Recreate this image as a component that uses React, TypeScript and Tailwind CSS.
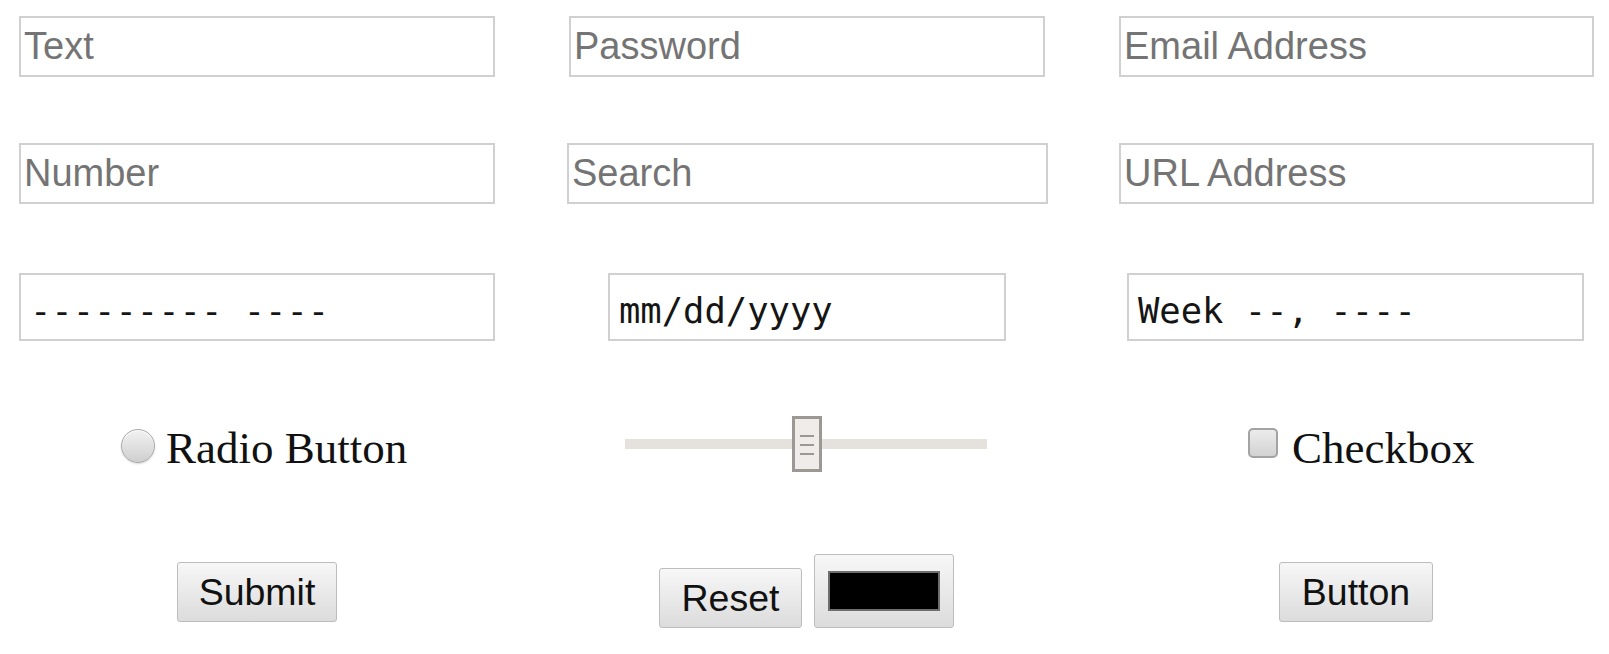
import React from "react";

const sans = "font-['Liberation_Sans',Arial,sans-serif]";
const mono = "font-['DejaVu_Sans_Mono',monospace]";
const serif = "font-['Liberation_Serif','Times_New_Roman',serif]";

function Field({ ph, cls }: { ph: string; cls: string }) {
  return (
    <input
      readOnly
      placeholder={ph}
      className={`${cls} ${sans} h-full border-2 border-[#d0d0d0] bg-white px-[3px] text-[38px] leading-none text-black outline-none placeholder:text-[#747474]`}
    />
  );
}

function MonoField({ text, cls }: { text: string; cls: string }) {
  return (
    <div
      className={`${cls} ${mono} flex h-full items-center border-2 border-[#d0d0d0] bg-white pl-[9px] pt-[8px] text-[35.5px] leading-none whitespace-pre text-[#151515]`}
    >
      {text}
    </div>
  );
}

const btn =
  "border border-[#bdbdbd] rounded-[3px] bg-gradient-to-b from-[#f7f7f7] to-[#dcdcdc] flex items-center justify-center";

export default function App() {
  return (
    <div className="w-[1609px] h-[654px] bg-white overflow-hidden">
      <div className="grid grid-cols-[540px_540px_529px] h-[61px] mt-[16px]">
        <div className="flex"><Field ph="Text" cls="ml-[19px] w-[476px]" /></div>
        <div className="flex"><Field ph="Password" cls="ml-[29px] w-[476px]" /></div>
        <div className="flex"><Field ph="Email Address" cls="ml-[39px] w-[475px]" /></div>
      </div>
      <div className="grid grid-cols-[540px_540px_529px] h-[61px] mt-[66px]">
        <div className="flex"><Field ph="Number" cls="ml-[19px] w-[476px]" /></div>
        <div className="flex"><Field ph="Search" cls="ml-[27px] w-[481px]" /></div>
        <div className="flex"><Field ph="URL Address" cls="ml-[39px] w-[475px]" /></div>
      </div>
      <div className="grid grid-cols-[540px_540px_529px] h-[68px] mt-[69px]">
        <div className="flex"><MonoField text="--------- ----" cls="ml-[19px] w-[476px]" /></div>
        <div className="flex"><MonoField text="mm/dd/yyyy" cls="ml-[68px] w-[398px]" /></div>
        <div className="flex"><MonoField text="Week --, ----" cls="ml-[47px] w-[457px]" /></div>
      </div>
      <div className="grid grid-cols-[540px_540px_529px] h-[209px]">
        <div className="flex items-center">
          <div className="ml-[121px] flex items-center">
            <div className="w-[34px] h-[34px] rounded-full border border-[#a9a9a9] bg-gradient-to-b from-[#f2f2f2] to-[#cfcfcf] shadow-[inset_0_1px_1px_rgba(255,255,255,0.9),0_1px_2px_rgba(0,0,0,0.15)]" />
            <span className={`${serif} ml-[11px] text-[45px] leading-none text-[#111] pt-[6px]`}>Radio Button</span>
          </div>
        </div>
        <div className="flex items-center">
          <div className="relative ml-[85px] w-[362px] h-[10px] bg-[#e5e2dd] mt-[-4px]">
            <div className="absolute left-[167px] top-[-23px] w-[30px] h-[56px] border-[3px] border-[#9c9893] bg-[#f0ece9] flex flex-col items-center pt-[16px] gap-[7px]">
              <div className="w-[14px] h-[2px] bg-[#9c9893]" />
              <div className="w-[14px] h-[2px] bg-[#9c9893]" />
              <div className="w-[14px] h-[2px] bg-[#9c9893]" />
            </div>
          </div>
        </div>
        <div className="flex items-center">
          <div className="ml-[168px] flex items-center">
            <div className="w-[30px] h-[30px] rounded-[5px] border-2 border-[#a3a3a3] bg-gradient-to-b from-[#ececec] to-[#d2d2d2] mt-[-6px]" />
            <span className={`${serif} ml-[14px] text-[45px] leading-none text-[#111] pt-[6px]`}>Checkbox</span>
          </div>
        </div>
      </div>
      <div className="grid grid-cols-[540px_540px_529px] h-[84px] items-start">
        <div className="flex">
          <div className={`${btn} ${sans} ml-[177px] mt-[12px] w-[160px] h-[60px] text-[37.5px] text-[#111]`}>Submit</div>
        </div>
        <div className="flex items-start">
          <div className={`${btn} ${sans} ml-[119px] mt-[18px] w-[143px] h-[60px] text-[37.5px] text-[#111]`}>Reset</div>
          <div className={`${btn} ml-[12px] mt-[4px] w-[140px] h-[74px]`}>
            <div className="w-[112px] h-[40px] bg-black border-2 border-[#6e6e6e]" />
          </div>
        </div>
        <div className="flex">
          <div className={`${btn} ${sans} ml-[199px] mt-[12px] w-[154px] h-[60px] text-[37.5px] text-[#111]`}>Button</div>
        </div>
      </div>
    </div>
  );
}
